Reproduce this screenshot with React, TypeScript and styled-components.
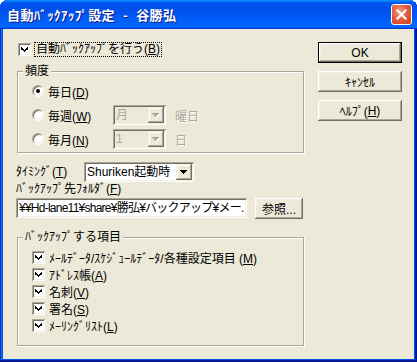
import React from 'react';
import styled, { createGlobalStyle } from 'styled-components';

const FACE = '#ece9d8';
const LIGHT = '#f1efe2';
const SHADOW = '#aca899';
const DARK = '#716f64';

const GlobalStyle = createGlobalStyle`
  html, body {
    margin: 0;
    padding: 0;
    background: #ffffff;
  }
  body {
    font-family: "Liberation Sans", "Noto Sans CJK JP", sans-serif;
    font-size: 12px;
    color: #000000;
  }
  * {
    box-sizing: border-box;
  }
`;

const Window = styled.div`
  width: 417px;
  height: 362px;
  display: flex;
  flex-direction: column;
  border-radius: 8px 8px 0 0;
  overflow: hidden;
  background: #0054e3;
  box-shadow: inset -1px -1px #00138c, inset 1px 1px #0831d9, inset -2px -2px #001ea0, inset 2px 2px #166aee;
`;

const TitleBar = styled.div`
  height: 29px;
  flex-shrink: 0;
  display: flex;
  align-items: center;
  justify-content: space-between;
  padding: 0 5px 0 7px;
  background: linear-gradient(180deg, #0997ff, #0053ee 10%, #0050ee 40%, #0066ff 86%, #0066ff 92%, #005bff 95%, #003dd7 97%, #003dd7);
`;

const Title = styled.div`
  color: #ffffff;
  font-family: "Noto Sans CJK JP", sans-serif;
  font-size: 13px;
  font-weight: bold;
  letter-spacing: 0.4px;
  text-shadow: 1px 1px #0a1883;
  white-space: nowrap;
`;

const TitleSep = styled.span`
  padding: 0 8px;
`;

const CloseButton = styled.div`
  width: 21px;
  height: 21px;
  border: 1px solid #ffffff;
  border-radius: 3px;
  display: flex;
  align-items: center;
  justify-content: center;
  background: radial-gradient(circle at 40% 35%, #f0a088 0%, #e0603f 45%, #c83a1a 100%);
`;

const Body = styled.div`
  flex: 1;
  display: flex;
  margin: 0 3px 3px 3px;
  padding: 12px 12px 0 13px;
  background: ${FACE};
`;

const MainColumn = styled.div`
  width: 289px;
  display: flex;
  flex-direction: column;
`;

const ButtonColumn = styled.div`
  margin-left: auto;
  padding-top: 1px;
  display: flex;
  flex-direction: column;
  gap: 8px;
`;

const Key = styled.span`
  text-decoration: underline;
  text-underline-offset: 1px;
`;

const CheckRow = styled.div<{ $indent?: number }>`
  height: 17px;
  display: flex;
  align-items: center;
  gap: 4px;
  padding-left: ${(p) => p.$indent ?? 0}px;
  white-space: nowrap;
`;

const CheckBox = styled.div`
  width: 13px;
  height: 13px;
  flex-shrink: 0;
  background: #ffffff;
  box-shadow: inset 1px 1px ${SHADOW}, inset -1px -1px #ffffff, inset 2px 2px ${DARK}, inset -2px -2px ${LIGHT};
  display: flex;
  align-items: center;
  justify-content: center;
`;

const FocusLabel = styled.span`
  margin-left: -1px;
  padding: 0 1px;
  line-height: 13px;
  border: 1px dotted #000000;
`;

const GroupBox = styled.div<{ $top: number; $bottom: number }>`
  margin: ${(p) => p.$top}px 0 0 1px;
  width: 287px;
  border: 1px solid ${SHADOW};
  box-shadow: inset 1px 1px #ffffff, 1px 1px #ffffff;
  padding-bottom: ${(p) => p.$bottom}px;
`;

const GroupCaption = styled.div`
  width: fit-content;
  margin: -8px 0 0 5px;
  padding: 0 2px;
  line-height: 14px;
  background: ${FACE};
  white-space: nowrap;
`;

const OptionList = styled.div<{ $top: number; $gap: number }>`
  margin-top: ${(p) => p.$top}px;
  padding-left: 14px;
  display: flex;
  flex-direction: column;
  gap: ${(p) => p.$gap}px;
`;

const RadioRow = styled.div`
  height: 20px;
  display: grid;
  grid-template-columns: 81px 53px auto;
  align-items: center;
`;

const RadioOption = styled.div`
  display: flex;
  align-items: center;
  gap: 4px;
  white-space: nowrap;
`;

const Radio = styled.div`
  width: 12px;
  height: 12px;
  border-radius: 50%;
  background: #ffffff;
  border: 1px solid;
  border-color: ${SHADOW} #ffffff #ffffff ${SHADOW};
  box-shadow: inset 1px 1px ${DARK}, inset -1px -1px ${LIGHT};
  display: flex;
  align-items: center;
  justify-content: center;
`;

const RadioDot = styled.div`
  width: 4px;
  height: 4px;
  border-radius: 50%;
  background: #000000;
`;

const GrayText = styled.span`
  margin-left: 9px;
  color: ${SHADOW};
  text-shadow: 1px 1px #ffffff;
`;

const ComboBox = styled.div<{ $width: number; $disabled?: boolean }>`
  width: ${(p) => p.$width}px;
  height: 20px;
  padding: 2px;
  display: flex;
  background: ${(p) => (p.$disabled ? FACE : '#ffffff')};
  color: ${(p) => (p.$disabled ? SHADOW : '#000000')};
  box-shadow: inset 1px 1px ${SHADOW}, inset -1px -1px #ffffff, inset 2px 2px ${DARK}, inset -2px -2px ${LIGHT};
`;

const ComboText = styled.div`
  flex: 1;
  padding-left: 1px;
  line-height: 16px;
  white-space: nowrap;
  overflow: hidden;
`;

const DropButton = styled.div`
  width: 16px;
  height: 16px;
  background: ${FACE};
  box-shadow: inset -1px -1px ${DARK}, inset 1px 1px ${LIGHT}, inset -2px -2px ${SHADOW}, inset 2px 2px #ffffff;
  display: flex;
  align-items: center;
  justify-content: center;
`;

const FieldRow = styled.div<{ $top: number }>`
  margin-top: ${(p) => p.$top}px;
  display: flex;
  align-items: center;
  white-space: nowrap;
`;

const FieldLabel = styled.div<{ $width?: number }>`
  width: ${(p) => (p.$width ? `${p.$width}px` : 'auto')};
  line-height: 14px;
  white-space: nowrap;
`;

const PathRow = styled.div`
  margin-top: 2px;
  display: flex;
  align-items: flex-start;
  gap: 8px;
`;

const TextBox = styled.div`
  width: 231px;
  height: 20px;
  padding: 2px 2px 2px 3px;
  line-height: 16px;
  letter-spacing: -0.75px;
  background: #ffffff;
  white-space: nowrap;
  overflow: hidden;
  box-shadow: inset 1px 1px ${SHADOW}, inset -1px -1px #ffffff, inset 2px 2px ${DARK}, inset -2px -2px ${LIGHT};
`;

const PushButton = styled.div<{ $width: number; $default?: boolean }>`
  width: ${(p) => p.$width}px;
  height: 21px;
  display: flex;
  align-items: center;
  justify-content: center;
  background: ${FACE};
  white-space: nowrap;
  border: ${(p) => (p.$default ? '1px solid #000000' : 'none')};
  box-shadow: inset -1px -1px ${DARK}, inset 1px 1px #ffffff, inset -2px -2px ${SHADOW}, inset 2px 2px ${LIGHT};
`;

const CheckMark = () => (
  <svg width="7" height="7" viewBox="0 0 7 7" shapeRendering="crispEdges">
    <path d="M6 0h1v3H6zM5 1h1v3H5zM4 2h1v3H4zM3 3h1v3H3zM2 2h1v3H2zM1 1h1v3H1zM0 0h1v3H0z" fill="#000" transform="translate(0,1) scale(1,0.85)" />
  </svg>
);

const Arrow = ({ disabled }: { disabled?: boolean }) => (
  <svg width="8" height="5" viewBox="0 0 8 5" shapeRendering="crispEdges">
    {disabled && <path d="M1 1h7v1H1zM2 2h5v1H2zM3 3h3v1H3zM4 4h1v1H4z" fill="#ffffff" />}
    <path d="M0 0h7v1H0zM1 1h5v1H1zM2 2h3v1H2zM3 3h1v1H3z" fill={disabled ? SHADOW : '#000000'} />
  </svg>
);

const Combo = ({ width, text, disabled }: { width: number; text: string; disabled?: boolean }) => (
  <ComboBox $width={width} $disabled={disabled}>
    <ComboText>{text}</ComboText>
    <DropButton>
      <Arrow disabled={disabled} />
    </DropButton>
  </ComboBox>
);

const Check = ({ children }: { children: React.ReactNode }) => (
  <CheckRow>
    <CheckBox>
      <CheckMark />
    </CheckBox>
    <span>{children}</span>
  </CheckRow>
);

function App() {
  return (
    <>
      <GlobalStyle />
      <Window>
        <TitleBar>
          <Title>
            自動ﾊﾞｯｸｱｯﾌﾟ設定<TitleSep>-</TitleSep>谷勝弘
          </Title>
          <CloseButton>
            <svg width="11" height="11" viewBox="0 0 11 11">
              <path d="M1.5 1.5l8 8M9.5 1.5l-8 8" stroke="#ffffff" strokeWidth="2.2" strokeLinecap="square" />
            </svg>
          </CloseButton>
        </TitleBar>
        <Body>
          <MainColumn>
            <CheckRow $indent={2}>
              <CheckBox>
                <CheckMark />
              </CheckBox>
              <FocusLabel>
                自動ﾊﾞｯｸｱｯﾌﾟを行う(<Key>B</Key>)
              </FocusLabel>
            </CheckRow>

            <GroupBox $top={13} $bottom={3}>
              <GroupCaption>頻度</GroupCaption>
              <OptionList $top={3} $gap={4}>
                <RadioRow>
                  <RadioOption>
                    <Radio>
                      <RadioDot />
                    </Radio>
                    <span>
                      毎日(<Key>D</Key>)
                    </span>
                  </RadioOption>
                </RadioRow>
                <RadioRow>
                  <RadioOption>
                    <Radio />
                    <span>
                      毎週(<Key>W</Key>)
                    </span>
                  </RadioOption>
                  <Combo width={53} text="月" disabled />
                  <GrayText>曜日</GrayText>
                </RadioRow>
                <RadioRow>
                  <RadioOption>
                    <Radio />
                    <span>
                      毎月(<Key>N</Key>)
                    </span>
                  </RadioOption>
                  <Combo width={53} text="1" disabled />
                  <GrayText>日</GrayText>
                </RadioRow>
              </OptionList>
            </GroupBox>

            <FieldRow $top={9}>
              <FieldLabel $width={68}>
                ﾀｲﾐﾝｸﾞ(<Key>T</Key>)
              </FieldLabel>
              <Combo width={110} text="Shuriken起動時" />
            </FieldRow>

            <FieldLabel>
              ﾊﾞｯｸｱｯﾌﾟ先ﾌｫﾙﾀﾞ(<Key>F</Key>)
            </FieldLabel>
            <PathRow>
              <TextBox>¥¥Hd-lane11¥share¥勝弘¥バックアップ¥メー.</TextBox>
              <PushButton $width={48}>参照...</PushButton>
            </PathRow>

            <GroupBox $top={18} $bottom={11}>
              <GroupCaption>ﾊﾞｯｸｱｯﾌﾟする項目</GroupCaption>
              <OptionList $top={5} $gap={0}>
                <Check>
                  ﾒｰﾙﾃﾞｰﾀ/ｽｹｼﾞｭｰﾙﾃﾞｰﾀ/各種設定項目 (<Key>M</Key>)
                </Check>
                <Check>
                  ｱﾄﾞﾚｽ帳(<Key>A</Key>)
                </Check>
                <Check>
                  名刺(<Key>V</Key>)
                </Check>
                <Check>
                  署名(<Key>S</Key>)
                </Check>
                <Check>
                  ﾒｰﾘﾝｸﾞﾘｽﾄ(<Key>L</Key>)
                </Check>
              </OptionList>
            </GroupBox>
          </MainColumn>

          <ButtonColumn>
            <PushButton $width={84} $default>
              OK
            </PushButton>
            <PushButton $width={84}>ｷｬﾝｾﾙ</PushButton>
            <PushButton $width={84}>
              ﾍﾙﾌﾟ(<Key>H</Key>)
            </PushButton>
          </ButtonColumn>
        </Body>
      </Window>
    </>
  );
}

export default App;
